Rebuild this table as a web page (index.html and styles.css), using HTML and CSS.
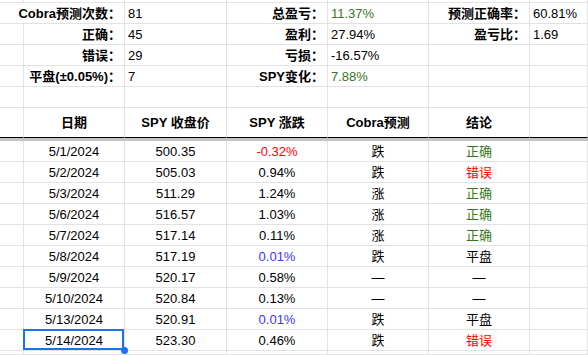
FILE: index.html
```html
<!DOCTYPE html>
<html lang="zh">
<head>
<meta charset="utf-8">
<title>Cobra</title>
<link rel="stylesheet" href="styles.css">
</head>
<body>
<div class="sheet">
  <div class="c"></div><div class="c"></div><div class="c"></div><div class="c"></div><div class="c"></div><div class="c"></div><div class="c"></div>

  <div class="c lab span2">Cobra预测次数：</div><div class="c val">81</div><div class="c lab">总盈亏：</div><div class="c val green">11.37%</div><div class="c lab">预测正确率：</div><div class="c val">60.81%</div>

  <div class="c"></div><div class="c lab">正确：</div><div class="c val">45</div><div class="c lab">盈利：</div><div class="c val">27.94%</div><div class="c lab">盈亏比：</div><div class="c val">1.69</div>

  <div class="c"></div><div class="c lab">错误：</div><div class="c val">29</div><div class="c lab">亏损：</div><div class="c val">-16.57%</div><div class="c"></div><div class="c"></div>

  <div class="c"></div><div class="c lab">平盘(±0.05%)：</div><div class="c val">7</div><div class="c lab">SPY变化：</div><div class="c val green">7.88%</div><div class="c"></div><div class="c"></div>

  <div class="c"></div><div class="c"></div><div class="c"></div><div class="c"></div><div class="c"></div><div class="c"></div><div class="c"></div>

  <div class="c h"></div><div class="c h">日期</div><div class="c h">SPY 收盘价</div><div class="c h">SPY 涨跌</div><div class="c h">Cobra预测</div><div class="c h">结论</div><div class="c h"></div>

  <div class="band"></div>

  <div class="c"></div><div class="c m">5/1/2024</div><div class="c m">500.35</div><div class="c m red">-0.32%</div><div class="c m">跌</div><div class="c m green">正确</div><div class="c"></div>
  <div class="c"></div><div class="c m">5/2/2024</div><div class="c m">505.03</div><div class="c m">0.94%</div><div class="c m">跌</div><div class="c m red">错误</div><div class="c"></div>
  <div class="c"></div><div class="c m">5/3/2024</div><div class="c m">511.29</div><div class="c m">1.24%</div><div class="c m">涨</div><div class="c m green">正确</div><div class="c"></div>
  <div class="c"></div><div class="c m">5/6/2024</div><div class="c m">516.57</div><div class="c m">1.03%</div><div class="c m">涨</div><div class="c m green">正确</div><div class="c"></div>
  <div class="c"></div><div class="c m">5/7/2024</div><div class="c m">517.14</div><div class="c m">0.11%</div><div class="c m">涨</div><div class="c m green">正确</div><div class="c"></div>
  <div class="c"></div><div class="c m">5/8/2024</div><div class="c m">517.19</div><div class="c m blue">0.01%</div><div class="c m">跌</div><div class="c m">平盘</div><div class="c"></div>
  <div class="c"></div><div class="c m">5/9/2024</div><div class="c m">520.17</div><div class="c m">0.58%</div><div class="c m">—</div><div class="c m">—</div><div class="c"></div>
  <div class="c"></div><div class="c m">5/10/2024</div><div class="c m">520.84</div><div class="c m">0.13%</div><div class="c m">—</div><div class="c m">—</div><div class="c"></div>
  <div class="c"></div><div class="c m">5/13/2024</div><div class="c m">520.91</div><div class="c m blue">0.01%</div><div class="c m">跌</div><div class="c m">平盘</div><div class="c"></div>
  <div class="c"></div><div class="c m sel">5/14/2024</div><div class="c m">523.30</div><div class="c m">0.46%</div><div class="c m">跌</div><div class="c m red">错误</div><div class="c"></div>

  <div class="c"></div><div class="c"></div><div class="c"></div><div class="c"></div><div class="c"></div><div class="c"></div><div class="c"></div>
</div>
</body>
</html>
```
FILE: styles.css
```css
html, body {
  margin: 0;
  padding: 0;
  background: #ffffff;
  overflow: hidden;
}

.sheet {
  display: grid;
  width: 588px;
  height: 355px;
  grid-template-columns: 24px 101px 102px 101px 101px 101px 58px;
  grid-template-rows: 3px repeat(5, 21px) 30px 3px repeat(10, 21px) 4px;
  font-family: "Liberation Sans", Arial, "Noto Sans CJK SC", sans-serif;
  font-size: 13px;
  color: #000000;
  overflow: hidden;
}

.c {
  box-sizing: border-box;
  border-right: 1px solid #e2e2e2;
  border-bottom: 1px solid #e2e2e2;
  padding: 1px 3px 0;
  line-height: 19px;
  white-space: nowrap;
  overflow: visible;
  position: relative;
}

.lab {
  text-align: right;
  font-weight: bold;
}

.span2 {
  grid-column: 1 / span 2;
}

.val {
  text-align: left;
}

.m {
  text-align: center;
}

.h {
  font-weight: bold;
  text-align: center;
  padding: 0 3px;
  line-height: 29px;
  border-bottom: 1px solid #000000;
}

.band {
  grid-column: 1 / -1;
  background: #c4c4c4;
}

.green { color: #38761d; }
.red { color: #ff0000; }
.blue { color: #3d33ff; }

.sel::before {
  content: "";
  position: absolute;
  left: -1px;
  top: -1px;
  right: 0;
  bottom: 0;
  border: 2px solid #1a73e8;
}

.sel::after {
  content: "";
  position: absolute;
  right: -4px;
  bottom: -4px;
  width: 7px;
  height: 7px;
  border-radius: 50%;
  background: #1a73e8;
  z-index: 2;
}
```
